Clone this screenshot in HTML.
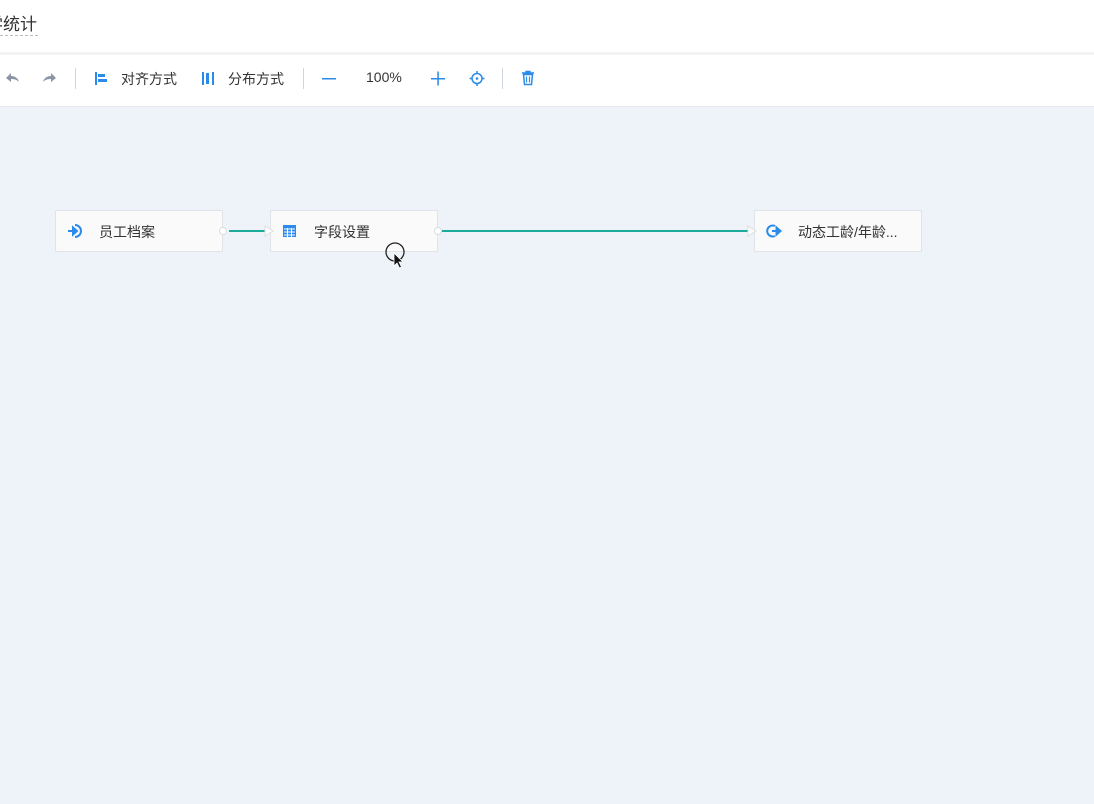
<!DOCTYPE html>
<html><head><meta charset="utf-8"><style>
body{margin:0;width:1094px;height:804px;overflow:hidden;background:#eef2f9;font-family:"Liberation Sans","Noto Sans CJK SC",sans-serif;position:relative}
.top{position:absolute;left:0;top:0;width:1094px;height:52px;background:#fff;overflow:hidden}
.title{position:absolute;left:-14px;top:10px;font-size:17px;color:#333;white-space:nowrap}
.dash{position:absolute;left:0;top:35px;width:38px;border-top:1px dashed #bbb}
.sep0{position:absolute;left:0;top:52px;width:1094px;height:3px;background:#f2f3f5}
.tb{position:absolute;left:0;top:55px;width:1094px;height:51px;background:#fff;border-bottom:1px solid #e5e8ee}
.t{position:absolute;top:69px;font-size:14px;color:#333}
.vs{position:absolute;top:68px;width:1px;height:21px;background:#cfd6e0}
.node{position:absolute;top:210px;width:168px;height:42px;background:#fafafa;border:1px solid #e0e3e8;border-radius:2px;box-sizing:border-box}
.node span{position:absolute;top:11px;font-size:14px;color:#333}
.port{position:absolute;width:8px;height:8px;border-radius:50%;background:#fff;border:1px solid #d9dce0;box-sizing:border-box}
.line{position:absolute;height:2px;background:#1aab9b}
</style></head><body>
<div class="top"><div class="title">学统计</div><div class="dash"></div></div>
<div class="sep0"></div>
<div class="tb"></div>
<svg style="position:absolute;left:0;top:60px" width="560" height="40">
<path d="M6 18 l5-5 v3 c4 0 7 2 8 6 c-2-2-4-3-8-3 v3z" fill="#8a96a8"/>
<path d="M56 18 l-5-5 v3 c-4 0-7 2-8 6 c2-2 4-3 8-3 v3z" fill="#8a96a8"/>
<rect x="95" y="12" width="2" height="13" fill="#2a8bea"/><rect x="98" y="14" width="7" height="3" fill="#2a8bea"/><rect x="98" y="19" width="9" height="3" fill="#2a8bea"/>
<rect x="202" y="12" width="2" height="13" fill="#2a8bea"/><rect x="206" y="13" width="3" height="11" fill="#2a8bea"/><rect x="212" y="12" width="2" height="13" fill="#2a8bea"/>
<rect x="322" y="18" width="14" height="1.5" fill="#2a8bea"/>
<rect x="431" y="18" width="14" height="1.5" fill="#2a8bea"/><rect x="437.3" y="11.5" width="1.5" height="14" fill="#2a8bea"/>
<circle cx="477" cy="18.5" r="5" fill="none" stroke="#2a8bea" stroke-width="1.5"/><circle cx="477" cy="18.5" r="1.3" fill="#2a8bea"/>
<path d="M477 11v3M477 23v3M469.5 18.5h3M481.5 18.5h3" stroke="#2a8bea" stroke-width="1.5"/>
<path d="M522 13h12M526 13v-1.5h4V13M523.5 14.5h9l-1 10h-7z" fill="none" stroke="#2a8bea" stroke-width="1.5"/>
<path d="M526.5 16.5v6M529.5 16.5v6" stroke="#2a8bea" stroke-width="1.2"/>
</svg>
<div class="t" style="left:121px">对齐方式</div>
<div class="t" style="left:228px">分布方式</div>
<div class="t" style="left:366px">100%</div>
<div class="vs" style="left:75px"></div><div class="vs" style="left:303px"></div><div class="vs" style="left:502px"></div>
<div class="line" style="left:229px;top:230px;width:38px"></div>
<div class="line" style="left:442px;top:230px;width:308px"></div>
<div class="node" style="left:55px"><span style="left:43px">员工档案</span>
<svg style="position:absolute;left:11px;top:12px" width="18" height="16"><path d="M8 2a6 6 0 1 1 0 12" fill="none" stroke="#2a8bea" stroke-width="2"/><path d="M1 8h8M6 4.5l4 3.5-4 3.5z" stroke="#2a8bea" stroke-width="2" fill="#2a8bea"/></svg></div>
<div class="node" style="left:270px"><span style="left:43px">字段设置</span>
<svg style="position:absolute;left:12px;top:14px" width="14" height="13"><rect x="0" y="0" width="13" height="12" fill="#2a8bea"/><path d="M1 4h11M1 7h11M1 10h11M4.5 3v9M8.5 3v9" stroke="#fff" stroke-width="1"/></svg></div>
<div class="node" style="left:754px"><span style="left:43px">动态工龄/年龄...</span>
<svg style="position:absolute;left:11px;top:12px" width="18" height="16"><path d="M9 3a5.5 5.5 0 1 0 0 10" fill="none" stroke="#2a8bea" stroke-width="2"/><path d="M6 8h7M10.5 4.5l4 3.5-4 3.5z" stroke="#2a8bea" stroke-width="2" fill="#2a8bea"/></svg></div>
<div class="port" style="left:219px;top:227px"></div>
<div class="port" style="left:434px;top:227px"></div>
<svg style="position:absolute;left:264px;top:225px" width="10" height="12"><path d="M1 1l8 5-8 5z" fill="#fff" stroke="#ddd"/></svg>
<svg style="position:absolute;left:747px;top:225px" width="10" height="12"><path d="M1 1l8 5-8 5z" fill="#fff" stroke="#ddd"/></svg>
<svg style="position:absolute;left:384px;top:242px" width="24" height="28"><circle cx="11" cy="10" r="9" fill="none" stroke="#222" stroke-width="1.3"/><path d="M10 11v13l3-3 2.5 5 2-1-2.5-5h4z" fill="#111" stroke="#fff" stroke-width="0.8"/></svg>
</body></html>
